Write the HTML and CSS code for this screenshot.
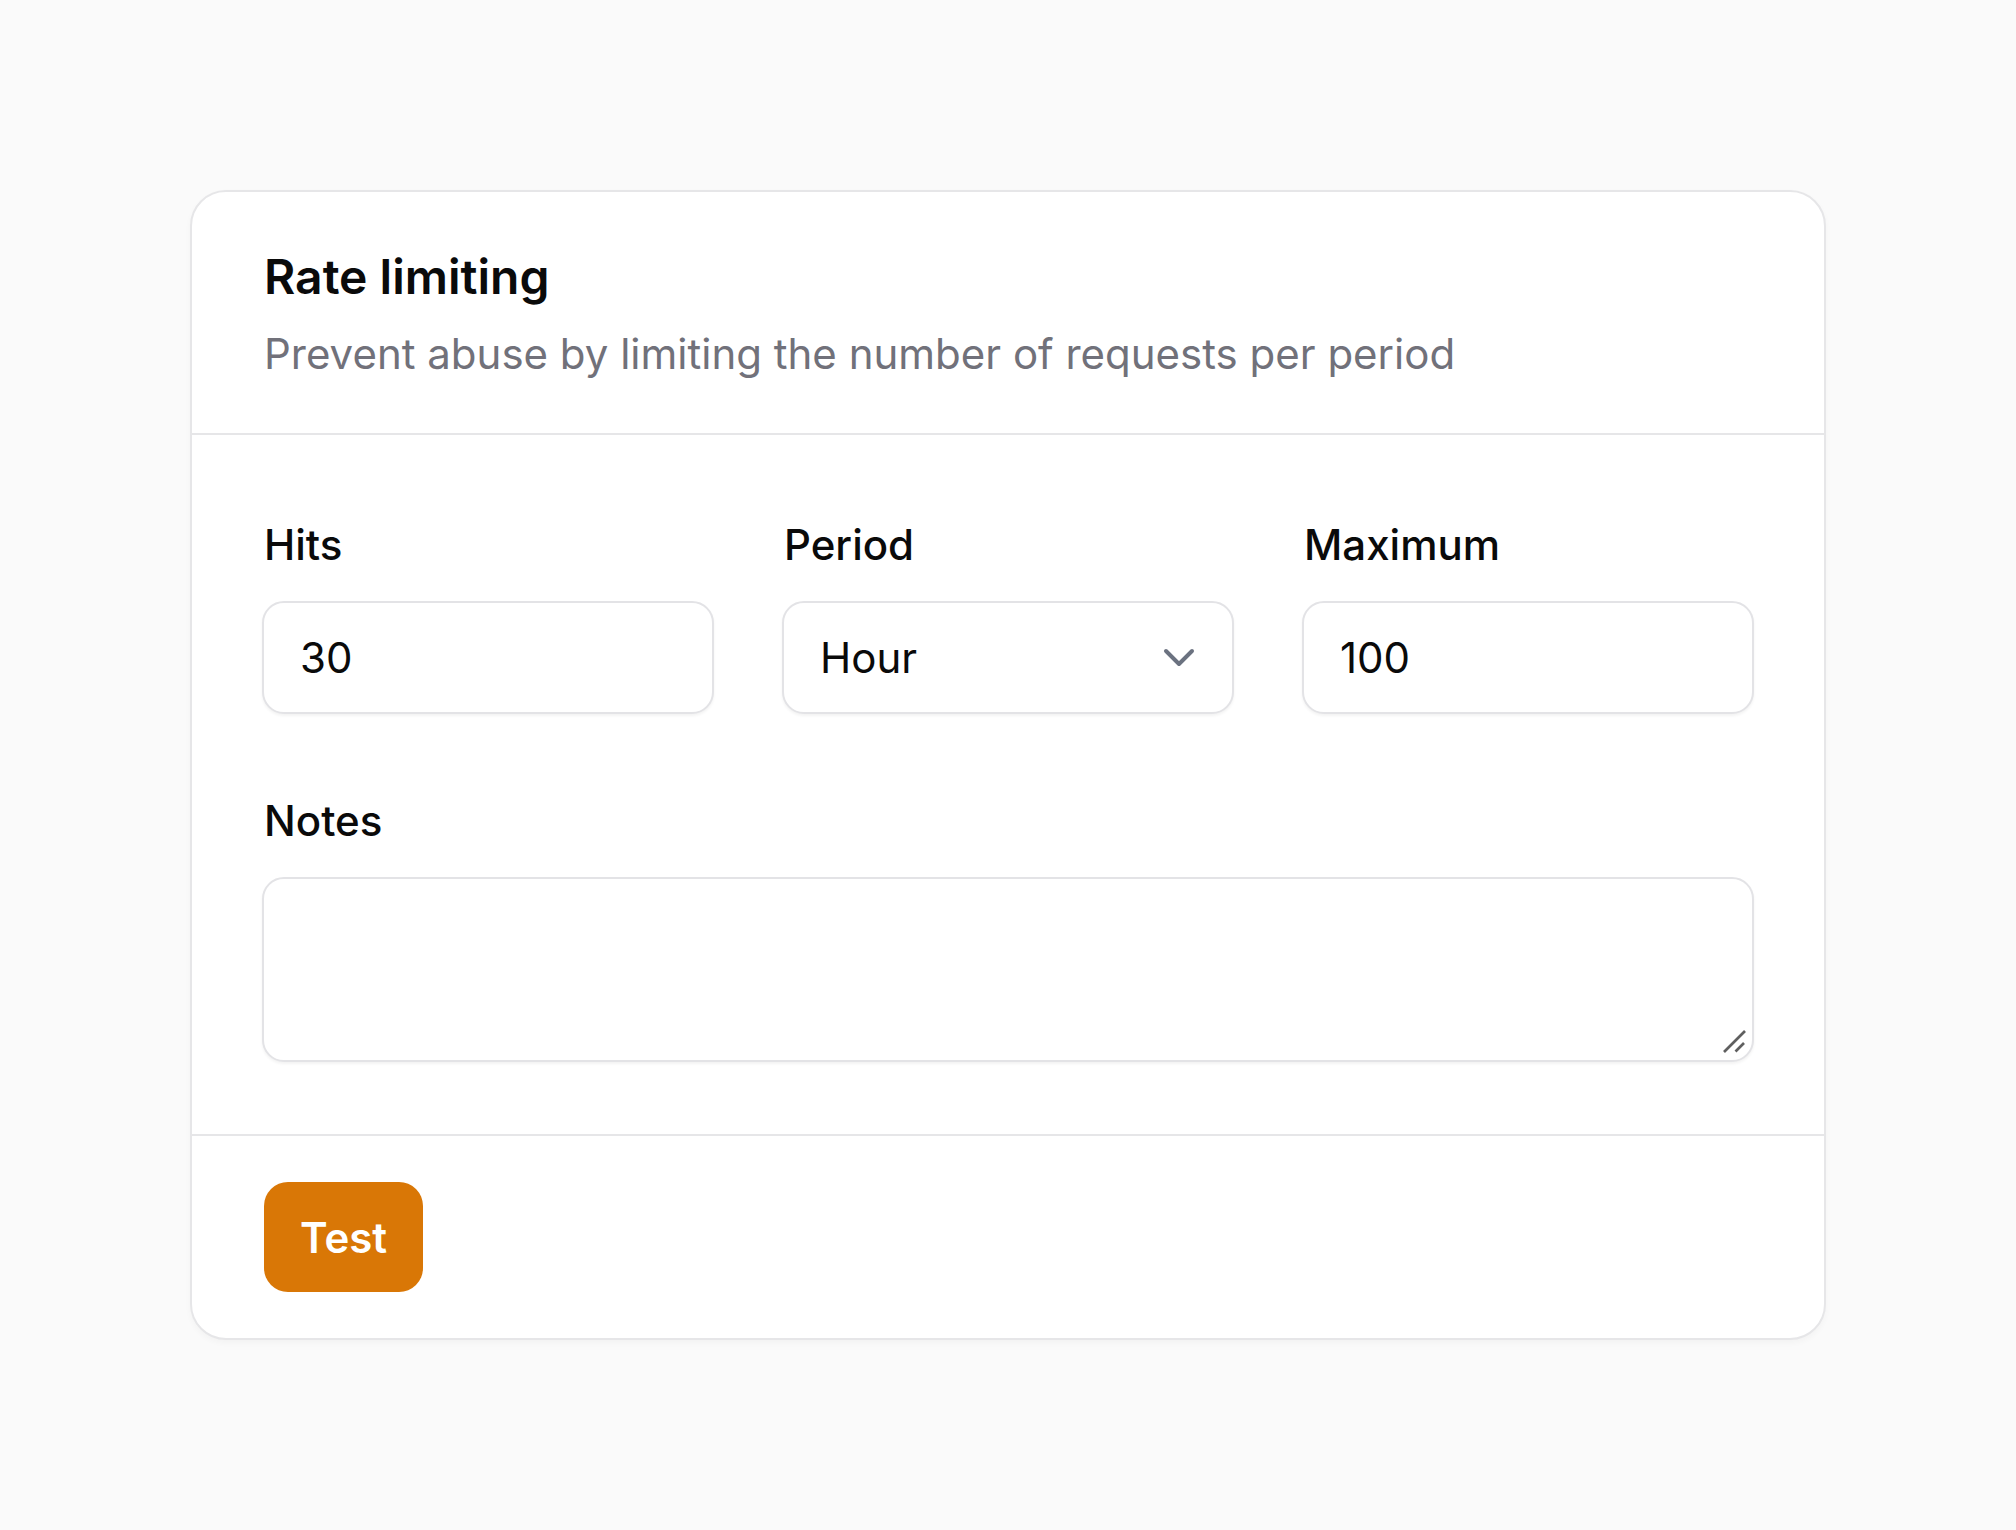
FILE: index.html
```html
<!DOCTYPE html>
<html lang="en">
<head>
<meta charset="utf-8">
<title>Rate limiting</title>
<link rel="stylesheet" href="styles.css">
</head>
<body>
<main class="page">
  <section class="card">
    <header class="card-header">
      <h1 class="card-title">Rate limiting</h1>
      <p class="card-desc">Prevent abuse by limiting the number of requests per period</p>
    </header>
    <div class="card-body">
      <div class="grid3">
        <div class="field">
          <label class="label" for="hits">Hits</label>
          <input class="input" id="hits" type="text" value="30">
        </div>
        <div class="field">
          <label class="label" for="period">Period</label>
          <div class="select-wrap">
            <select class="input select" id="period">
              <option>Hour</option>
              <option>Minute</option>
              <option>Day</option>
            </select>
            <svg class="chevron" width="36" height="24" viewBox="0 0 36 24" aria-hidden="true">
              <path d="M5 6 L18 19 L31 6" fill="none" stroke="#6b7280" stroke-width="4" stroke-linecap="round" stroke-linejoin="round"/>
            </svg>
          </div>
        </div>
        <div class="field">
          <label class="label" for="max">Maximum</label>
          <input class="input" id="max" type="text" value="100">
        </div>
      </div>
      <div class="field notes">
        <label class="label" for="notes">Notes</label>
        <div class="textarea-wrap">
          <textarea class="input textarea" id="notes"></textarea>
          <svg class="grip" width="30" height="30" viewBox="0 0 30 30" aria-hidden="true">
            <path d="M4 24 L25 3" stroke="#5f5f5f" stroke-width="2.6" stroke-linecap="butt"/>
            <path d="M15.5 23.5 L24 15" stroke="#5f5f5f" stroke-width="2.6" stroke-linecap="butt"/>
          </svg>
        </div>
      </div>
    </div>
    <footer class="card-footer">
      <button class="btn" type="button">Test</button>
    </footer>
  </section>
</main>
</body>
</html>
```

FILE: styles.css
```css
* { box-sizing: border-box; }

html, body {
  margin: 0;
  padding: 0;
  background: #fafafa;
  font-family: Inter, "Noto Sans", "Liberation Sans", sans-serif;
  color: #0a0a0a;
}

.page {
  padding: 190px 0 0 190px;
  min-height: 1530px;
}

.card {
  width: 1636px;
  background: #ffffff;
  border: 2px solid #e6e6e8;
  border-radius: 36px;
  box-shadow: 0 3px 6px rgba(0, 0, 0, 0.03);
  overflow: hidden;
}

.card-header {
  padding: 49px 72px 49px;
  border-bottom: 2px solid #e6e6e8;
}

.card-title {
  margin: 0;
  font-size: 48px;
  line-height: 72px;
  font-weight: 600;
  color: #0a0a0a;
}

.card-desc {
  margin: 11px 0 0;
  font-size: 42px;
  line-height: 60px;
  color: #71717a;
}

.card-body {
  padding: 80px 70px 72px;
  display: flex;
  flex-direction: column;
  gap: 77px;
  border-bottom: 2px solid #e6e6e8;
}

.grid3 {
  display: grid;
  grid-template-columns: repeat(3, 1fr);
  column-gap: 68px;
}

.field {
  display: flex;
  flex-direction: column;
}

.label {
  font-size: 42px;
  line-height: 60px;
  font-weight: 500;
  color: #0a0a0a;
  margin-bottom: 26px;
  padding-left: 2px;
}

.input {
  width: 100%;
  height: 113px;
  border: 2px solid #e3e3e6;
  border-radius: 22px;
  background: #ffffff;
  padding: 0 36px;
  font-family: Inter, "Noto Sans", "Liberation Sans", sans-serif;
  font-size: 42px;
  color: #0a0a0a;
  box-shadow: 0 2px 3px rgba(0, 0, 0, 0.05);
  outline: none;
}

.select-wrap,
.textarea-wrap {
  position: relative;
}

.select {
  appearance: none;
  -webkit-appearance: none;
}

.chevron {
  position: absolute;
  right: 37px;
  top: 44px;
  pointer-events: none;
}

.textarea {
  height: 185px;
  resize: none;
  padding: 24px 36px;
  display: block;
}

.grip {
  position: absolute;
  right: 4px;
  bottom: 4px;
  pointer-events: none;
}

.card-footer {
  padding: 46px 72px 46px;
}

.btn {
  height: 110px;
  padding: 0 36px;
  border: none;
  border-radius: 24px;
  background: #d97706;
  color: #ffffff;
  font-family: Inter, "Noto Sans", "Liberation Sans", sans-serif;
  font-size: 42px;
  font-weight: 600;
  cursor: pointer;
}
```
